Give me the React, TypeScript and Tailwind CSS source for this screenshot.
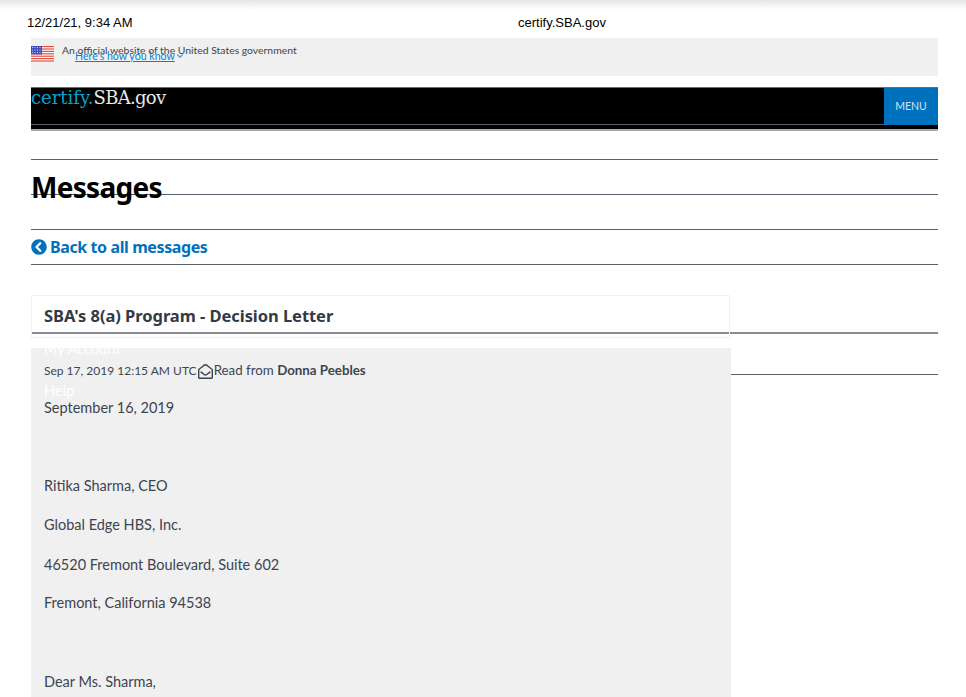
import React from 'react';
import { FaChevronCircleLeft, FaRegEnvelopeOpen } from 'react-icons/fa';
import { ChevronDown } from 'lucide-react';

const SANS = "font-['Lato','Noto_Sans',sans-serif]";
const BOLD = "font-['Noto_Sans',sans-serif] font-bold";

function Flag() {
  const stripes = [0, 1, 2, 3, 4, 5, 6];
  return (
    <svg width="23" height="16" viewBox="0 0 23 16" className="shrink-0">
      <rect width="23" height="16" fill="#fff" />
      {stripes.map(i => (
        <rect key={i} y={i * 2.4} width="23" height="1.2" fill="#e0523f" />
      ))}
      <rect width="11" height="8.4" fill="#3f4fc0" />
      {[1.5, 4, 6.5].map(y => [1.5, 4, 6.5, 9].map(x => (
        <circle key={`${x}-${y}`} cx={x} cy={y} r="0.5" fill="#fff" />
      )))}
    </svg>
  );
}

function Banner() {
  return (
    <div className="mt-[7px] h-[38px] bg-[#f0f0f0] flex">
      <div className="mt-2">
        <Flag />
      </div>
      <div className="ml-2 mt-[6px] text-[10.4px] leading-3 text-[#444]">
        <div>An official website of the United States government</div>
        <div className="-mt-[6px] ml-[13px] flex items-center text-[10.6px] text-[#0b7fd0]">
          <span className="underline">Here's how you know</span>
          <ChevronDown size={10} strokeWidth={3} color="#5b9fd6" />
        </div>
      </div>
    </div>
  );
}

function Header() {
  return (
    <div className="mt-[11px] h-[44px] bg-black border-t border-[#6b6b75] border-b-2 border-b-[#a9aab0]">
      <div className="flex h-[37px] border-b border-[#5b616b]">
        <div className="flex-1 font-['DejaVu_Serif',serif] text-[18px] leading-5 text-[#e6e9ea]">
          <span className="text-[#00a6d2]">certify.</span>
          <span className="tracking-[-0.7px]">SBA.gov</span>
        </div>
        <div className="w-[54px] -mb-[1px] bg-[#0071bc] flex items-center justify-center text-[10.5px] text-[#cfe4f4]">
          MENU
        </div>
      </div>
    </div>
  );
}

function Rules() {
  return (
    <div className="col-start-1 row-start-1">
      <div className="h-[29px] border-b border-[#5b616b]" />
      <div className="h-[35px] border-b border-[#5b616b]" />
      <div className="h-[35px] border-b border-[#5b616b]" />
      <div className="h-[35px] border-b border-[#5b616b]" />
      <div className="h-[69px] border-b-2 border-[#8b8b93]" />
      <div className="h-[41px] border-b border-[#5b616b]" />
    </div>
  );
}

function Letter() {
  return (
    <div className="flow-root mt-[10px] -mr-[1px] h-[349px] bg-[#f0f0f0] px-[13px] text-[14.5px] text-[#3d4551]">
      <div className="h-[12px] -mt-[9px] text-white leading-5">My Account</div>
      <div className="mt-[10px] flex items-center h-5">
        <span className="text-[12px]">Sep 17, 2019 12:15 AM UTC</span>
        <FaRegEnvelopeOpen size={15} className="mx-[1px]" />
        <span className="text-[13.3px]">Read from <b className="font-bold">Donna Peebles</b></span>
      </div>
      <div className="h-[10px] text-white leading-5">Help</div>
      <div className="leading-5 mt-[7px]">September 16, 2019</div>
      <div className="leading-5 mt-[58px]">Ritika Sharma, CEO</div>
      <div className="leading-5 mt-[19px]">Global Edge HBS, Inc.</div>
      <div className="leading-5 mt-[20px]">46520 Fremont Boulevard, Suite 602</div>
      <div className="leading-5 mt-[18px]">Fremont, California 94538</div>
      <div className="leading-5 mt-[59px]">Dear Ms. Sharma,</div>
    </div>
  );
}

function Content() {
  return (
    <div className="col-start-1 row-start-1">
      <h1 className={`mt-[36px] h-[40px] text-[28px] tracking-[-0.7px] leading-10 text-black ${BOLD}`}>Messages</h1>
      <a className={`mt-[28px] h-6 flex items-center gap-[3px] text-[#0071bc] text-[16px] tracking-[-0.4px] ${BOLD}`}>
        <FaChevronCircleLeft size={16} />
        <span>Back to all messages</span>
      </a>
      <div className="mt-[36px] w-[699px]">
        <div className={`h-[43px] border border-[#f2f2f2] px-3 flex items-center text-[#323a45] text-[16.5px] tracking-[-0.05px] ${BOLD}`}>
          SBA's 8(a) Program - Decision Letter
        </div>
        <Letter />
      </div>
    </div>
  );
}

export default function App() {
  return (
    <div className={`h-[697px] overflow-hidden bg-white ${SANS}`}>
      <div className="h-[10px] bg-gradient-to-b from-[#e6e6e6] to-white" />
      <div className="flex h-[21px] items-end pl-[27px] font-['Liberation_Sans',sans-serif] text-[13px] leading-4 text-black">
        <div className="w-[491px]">12/21/21, 9:34 AM</div>
        <div>certify.SBA.gov</div>
      </div>
      <div className="ml-[31px] mr-[28px]">
        <Banner />
        <Header />
        <div className="grid">
          <Rules />
          <Content />
        </div>
      </div>
    </div>
  );
}
